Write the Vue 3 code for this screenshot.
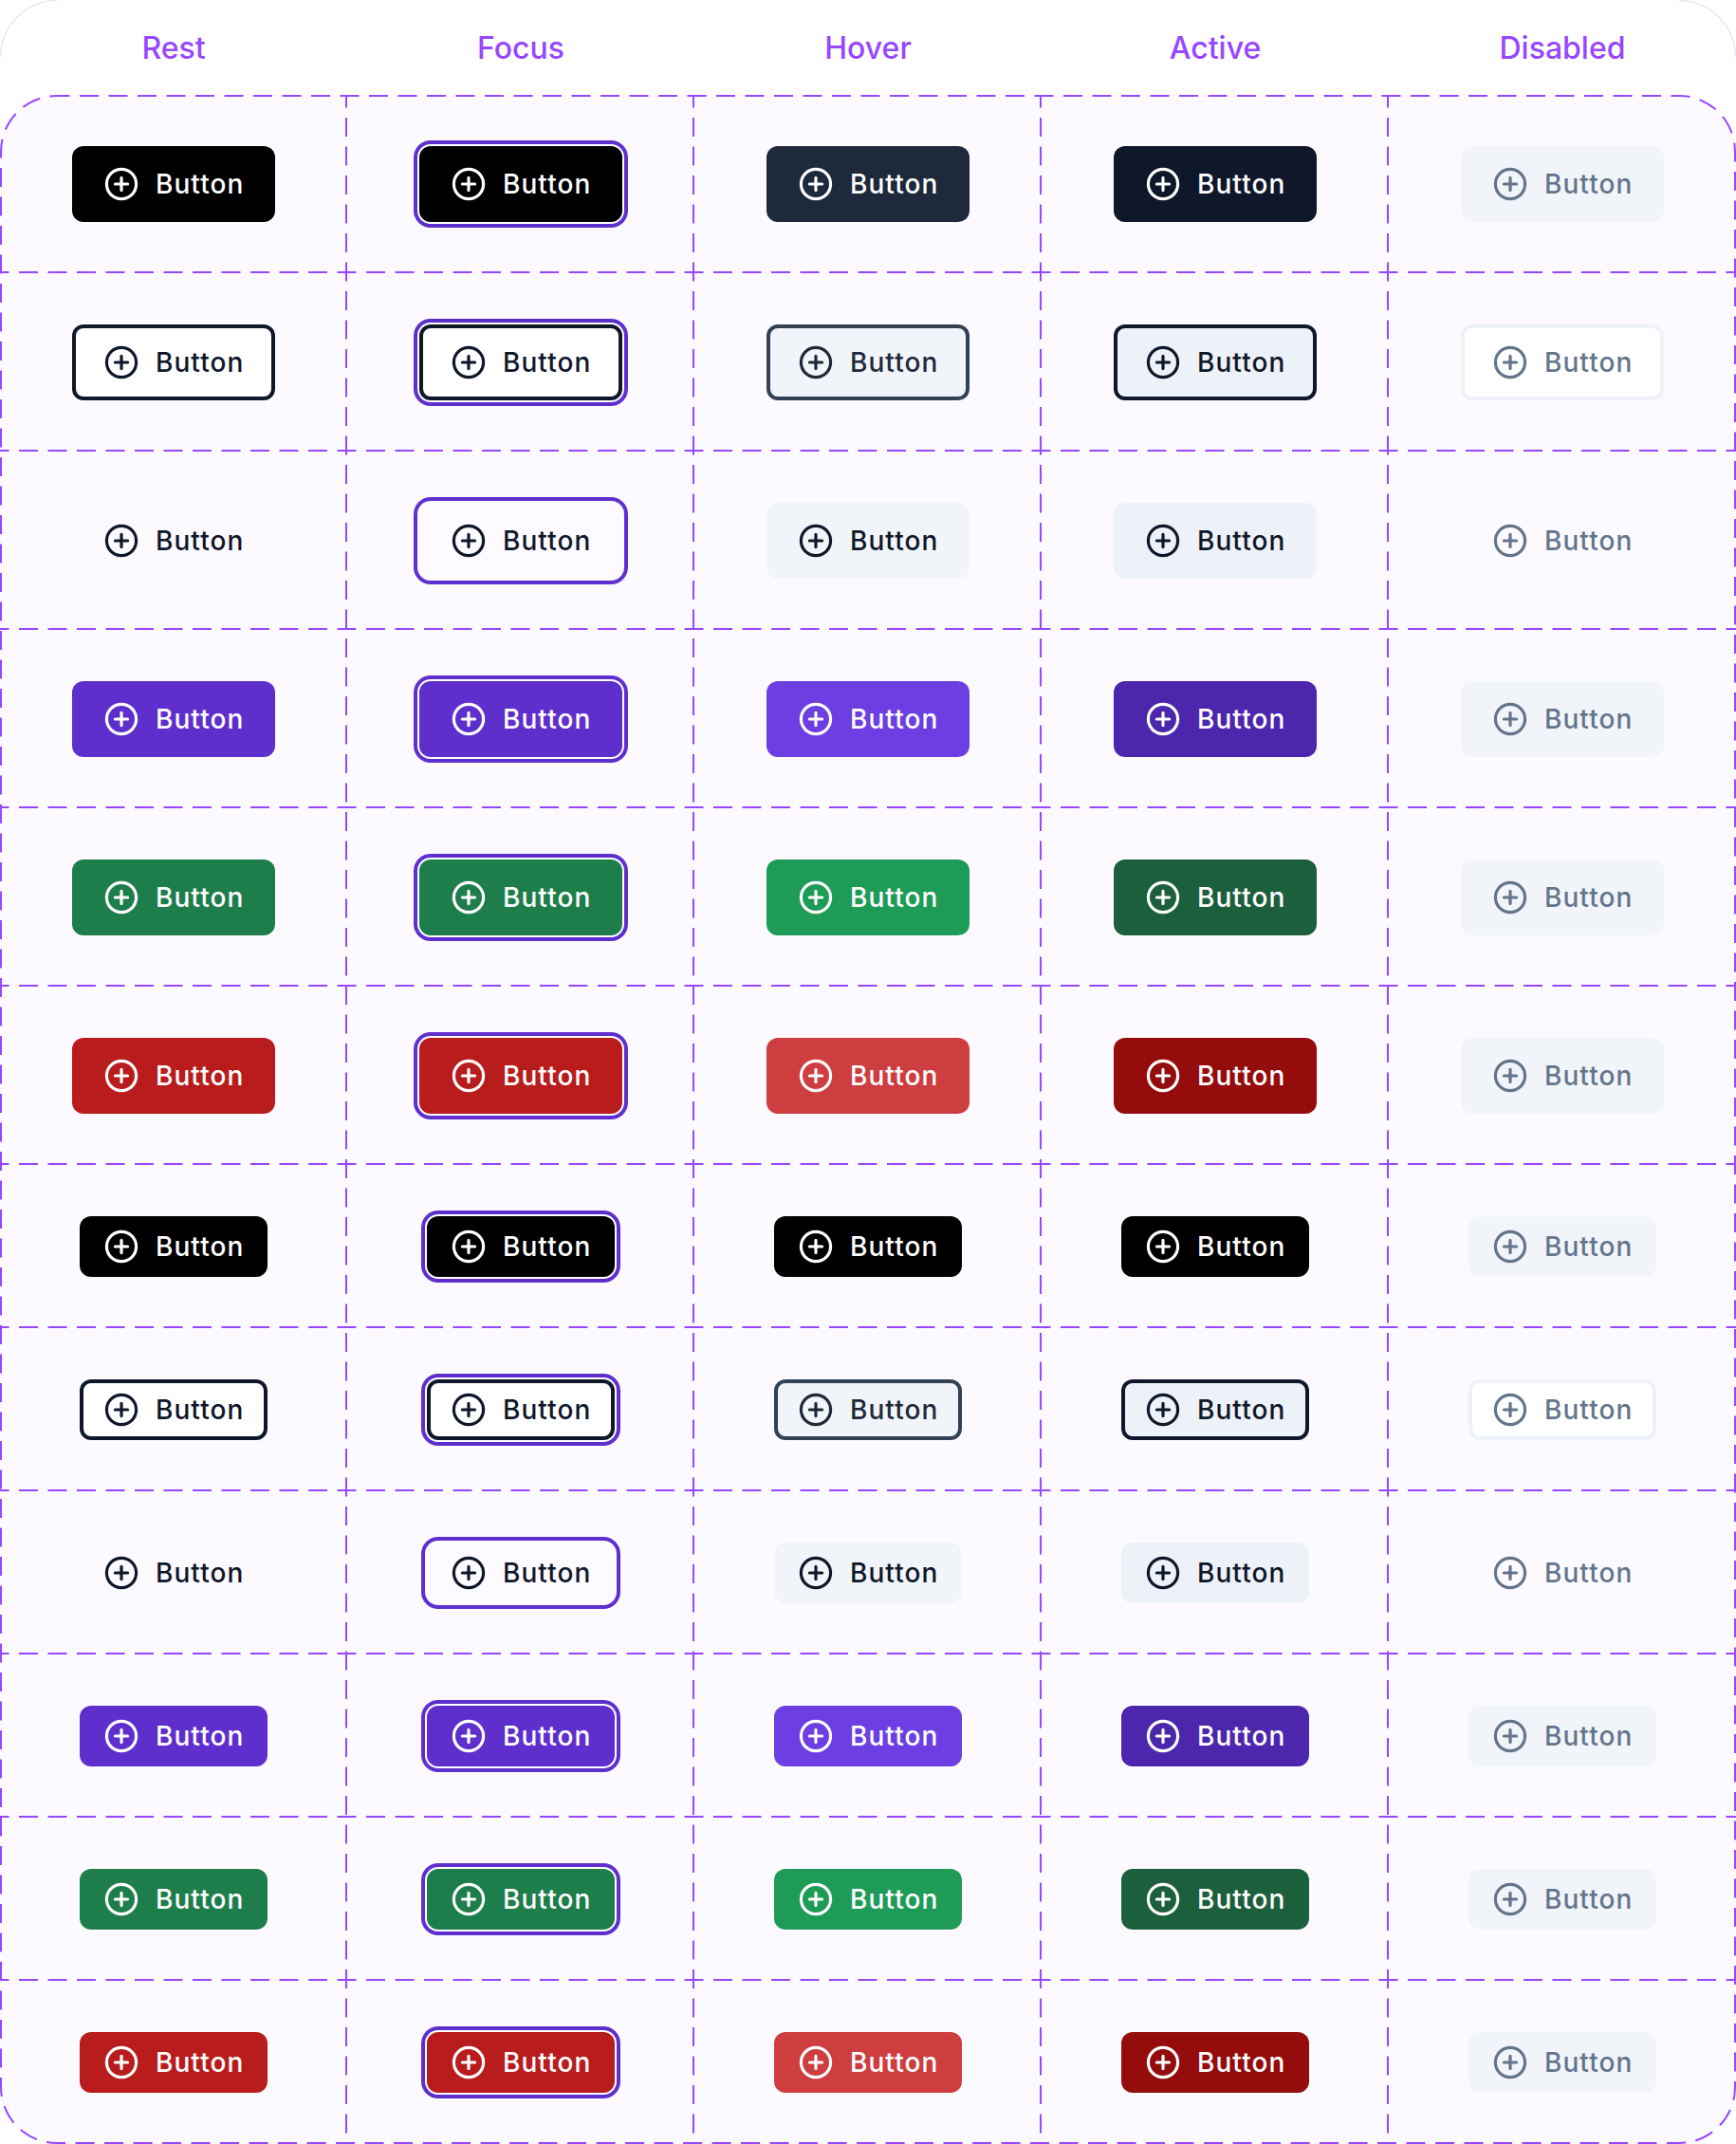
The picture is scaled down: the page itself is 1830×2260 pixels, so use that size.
<script setup>
const states = ["Rest", "Focus", "Hover", "Active", "Disabled"];
const variants = ["solid", "outline", "ghost", "primary", "success", "danger"];
const rows = [
  ...variants.map((v) => ({ variant: v, size: "lg" })),
  ...variants.map((v) => ({ variant: v, size: "sm" })),
];

// y of the row separators inside the board, they sit 1px above the row edge
const rowLines = [];
let y = 0;
rows.forEach((r) => {
  y += r.size === "lg" ? 188 : 172;
  rowLines.push(y - 1);
});
rowLines.pop();
const colLines = [365, 731, 1097, 1463];
</script>

<template>
  <div class="page">
    <header class="heads">
      <span class="corner corner-left"></span>
      <span class="corner corner-right"></span>
      <div v-for="s in states" :key="s" class="head">{{ s }}</div>
    </header>
    <section class="board">
      <template v-for="(row, i) in rows" :key="i">
        <div v-for="s in states" :key="s" class="cell">
          <button
            type="button"
            class="btn"
            :class="[row.size, row.variant, s.toLowerCase()]"
          >
            <svg class="icon" viewBox="0 0 20 20" fill="none" stroke="currentColor" stroke-width="1.6" stroke-linecap="round" stroke-linejoin="round">
              <circle cx="10" cy="10" r="7.8" />
              <path d="M10 6.7v6.6M6.7 10h6.6" />
            </svg>
            <span class="label">Button</span>
          </button>
        </div>
      </template>
      <svg class="guides" width="1830" height="2160" viewBox="0 0 1830 2160" fill="none">
        <rect class="frame" x="1" y="1" width="1828" height="2158" rx="59" ry="59" />
        <line v-for="x in colLines" :key="x" class="col-line" :x1="x" y1="0" :x2="x" y2="2160" />
        <line v-for="ly in rowLines" :key="ly" class="row-line" x1="0" :y1="ly" x2="1830" :y2="ly" />
      </svg>
    </section>
  </div>
</template>

<style scoped>
.page {
  width: 1830px;
  height: 2260px;
  background: #fff;
  font-family: Inter, "Liberation Sans", sans-serif;
  overflow: hidden;
}

.heads {
  position: relative;
  display: grid;
  grid-template-columns: repeat(5, 366px);
  height: 100px;
}

.corner {
  position: absolute;
  top: 0;
  width: 60px;
  height: 60px;
  box-sizing: border-box;
  border-top: 1px solid #e4dcf5;
}

.corner-left {
  left: 0;
  border-left: 1px solid #e4dcf5;
  border-top-left-radius: 60px;
}

.corner-right {
  right: 0;
  border-right: 1px solid #e4dcf5;
  border-top-right-radius: 60px;
}

.head {
  display: flex;
  align-items: center;
  justify-content: center;
  padding-top: 2px;
  color: #9747ff;
  font-size: 32px;
  font-weight: 500;
  line-height: 98px;
}

.board {
  position: relative;
  display: grid;
  grid-template-columns: repeat(5, 366px);
  grid-auto-rows: min-content;
  height: 2160px;
  background: #fcfaff;
  border-radius: 60px;
}

.cell {
  display: flex;
  align-items: center;
  justify-content: center;
  padding: 54px 0;
}

.guides {
  position: absolute;
  top: 0;
  left: 0;
  pointer-events: none;
  stroke: #9747ff;
  stroke-width: 2;
  stroke-dasharray: 20 10.5;
}

.frame { stroke-dashoffset: 6.5; }
.col-line { stroke-dashoffset: 6.5; }
.row-line { stroke-dashoffset: 10.5; }

.btn {
  display: flex;
  align-items: center;
  gap: 16px;
  border: 0;
  border-radius: 12px;
  font: 550 28px/40px Inter, "Liberation Sans", sans-serif;
  letter-spacing: 1.05px;
  background: transparent;
  box-sizing: border-box;
}

.lg {
  width: 214px;
  padding: 20px 0 20px 32px;
}

.sm {
  width: 198px;
  padding: 12px 0 12px 24px;
}

.label {
  white-space: nowrap;
}

.icon {
  width: 40px;
  height: 40px;
  flex: none;
}

/* solid */
.solid { background: #000; color: #fff; }
.lg.solid.hover { background: #1e293b; }
.lg.solid.active { background: #0f172a; }

/* outline */
.outline { background: #fff; color: #0f172a; box-shadow: inset 0 0 0 4px #0f172a; }
.outline.hover { background: #f1f5f9; box-shadow: inset 0 0 0 4px #334155; color: #1e293b; }
.outline.active { background: #edf1f8; }

/* ghost */
.ghost { color: #0f172a; }
.ghost.hover { background: #f1f5f9; }
.ghost.active { background: #edf1f8; }

/* primary */
.primary { background: #5f2fce; color: #fff; }
.primary.hover { background: #6d3fe3; }
.primary.active { background: #4c26ad; }

/* success */
.success { background: #1e7e4b; color: #fff; }
.success.hover { background: #1f9b58; }
.success.active { background: #1c5f3c; }

/* danger */
.danger { background: #b91c1c; color: #fff; }
.danger.hover { background: #ce3d3f; }
.danger.active { background: #950c0c; }

/* focus ring */
.btn.focus {
  box-shadow: 0 0 0 2px #fff, 0 0 0 6px #5f2fce;
}
.outline.focus {
  box-shadow: inset 0 0 0 4px #0f172a, 0 0 0 2px #fff, 0 0 0 6px #5f2fce;
}
.ghost.focus {
  background: #fdfbff;
  box-shadow: 0 0 0 2px #fdfbff, 0 0 0 6px #5f2fce;
}

/* disabled */
.btn.disabled { background: #f1f5f9; color: #64748b; box-shadow: none; }
.outline.disabled { background: #fff; box-shadow: inset 0 0 0 4px #edf1f8; }
.ghost.disabled { background: transparent; }
</style>
